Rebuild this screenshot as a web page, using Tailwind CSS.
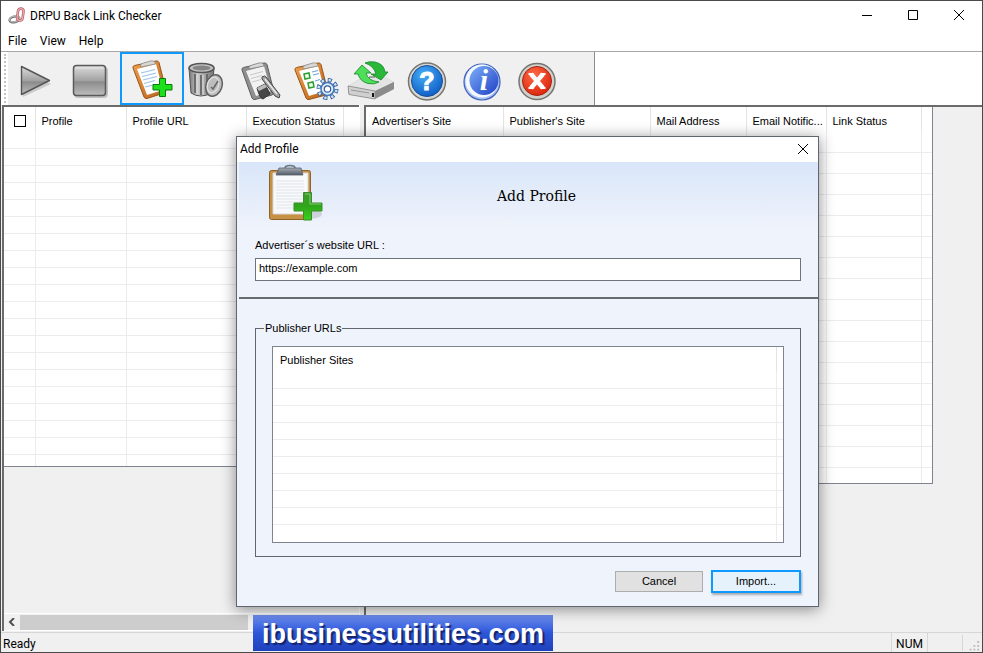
<!DOCTYPE html>
<html lang="en">
<head>
    <meta charset="UTF-8">
    <meta name="viewport" content="width=device-width, initial-scale=1.0">
    <title>DRPU Back Link Checker</title>
    <script src="https://cdn.jsdelivr.net/npm/@tailwindcss/browser@4"></script>
</head>
<body class="bg-[#f0f0f0] text-black font-['Liberation_Sans',sans-serif] text-[11px]">
<div class="relative flex flex-col min-h-screen border border-[#4a4a4a] overflow-hidden">

    <!-- Title bar -->
    <header class="flex items-center h-[30px] bg-white pl-[7px] font-['Roboto',sans-serif] text-[12px]">
        <svg class="w-[18px] h-[18px] mr-1" viewBox="0 0 18 18" fill="none">
            <ellipse cx="6.500" cy="12.500" rx="5" ry="2.800" transform="rotate(-12 6 12.500)" stroke="#6f6f6f" stroke-width="2.400"/>
            <ellipse cx="6.500" cy="12" rx="5" ry="2.800" transform="rotate(-12 6 12)" stroke="#b9b9b9" stroke-width="1.200"/>
            <rect x="9.500" y="1.500" width="5.500" height="12" rx="2.800" transform="rotate(8 12 8)" stroke="#b8626a" stroke-width="2.600"/>
            <rect x="9.500" y="1.500" width="5.500" height="12" rx="2.800" transform="rotate(8 12 8)" stroke="#eda9ae" stroke-width="1.200"/>
        </svg>
        <h1 class="grow">DRPU Back Link Checker</h1>
        <button aria-label="Minimize" class="w-[46px] h-[30px] flex items-center justify-center">
            <svg class="w-3 h-3" viewBox="0 0 12 12" stroke="#000"><path d="M1 5.500h10"/></svg>
        </button>
        <button aria-label="Maximize" class="w-[46px] h-[30px] flex items-center justify-center">
            <svg class="w-3 h-3" viewBox="0 0 12 12" fill="none" stroke="#000"><path d="M1.500 .5h9v9h-9z"/></svg>
        </button>
        <button aria-label="Close" class="w-[46px] h-[30px] flex items-center justify-center">
            <svg class="w-3 h-3" viewBox="0 0 12 12" stroke="#000"><path d="M1 0l10 10M11 0L1 10"/></svg>
        </button>
    </header>

    <!-- Menu -->
    <nav class="flex gap-[13px] h-5 bg-white pl-[7px] items-center font-['Roboto',sans-serif] text-[12px]">
        <a href="#">File</a>
        <a href="#">View</a>
        <a href="#">Help</a>
    </nav>

    <!-- Toolbar -->
    <div class="flex h-[54px] bg-white border-t border-[#a8a8a8]">
        <div class="w-[7px] flex justify-center py-[2px]">
            <div class="w-[2px] border-l-2 border-dotted border-[#c4c4c4]"></div>
        </div>
        <div class="flex items-center bg-[#f0f0f0] border-r border-[#8c8c8c] w-[587px]">
            <button aria-label="Start" class="w-[54px] h-full flex items-center justify-center pt-1">
                <svg class="w-12 h-12" viewBox="0 0 48 48">
                    <defs><linearGradient id="grey" x1="0" y1="0" x2="0" y2="1"><stop offset="0" stop-color="#dcdcdc"/><stop offset=".5" stop-color="#a2a2a2"/><stop offset=".55" stop-color="#8c8c8c"/><stop offset="1" stop-color="#bdbdbd"/></linearGradient></defs>
                    <path d="M12 12v28l28-13z" fill="#000" opacity=".15"/>
                    <path d="M10.500 9.500v28l28-14z" fill="url(#grey)" stroke="#555" stroke-width="1.400" stroke-linejoin="round"/>
                </svg>
            </button>
            <button aria-label="Stop" class="w-[54px] h-full flex items-center justify-center pt-1">
                <svg class="w-12 h-12" viewBox="0 0 48 48">
                    <rect x="9" y="10" width="34" height="31" rx="4" fill="#000" opacity=".2"/>
                    <rect x="8.500" y="8.500" width="32" height="30" rx="3" fill="url(#grey)" stroke="#5a5a5a" stroke-width="1.500"/>
                    <path d="M10.500 11h28" stroke="#e8e8e8"/>
                </svg>
            </button>
            <button aria-label="Add Profile" class="ml-1 -mr-[6px] w-16 h-[53px] border-2 border-[#0d99ff] flex items-center justify-center">
                <svg class="w-12 h-12" viewBox="0 0 48 48">
                    <defs>
                        <linearGradient id="board" x1="0" y1="0" x2="1" y2="1"><stop offset="0" stop-color="#f0a04c"/><stop offset="1" stop-color="#b9621a"/></linearGradient>
                    </defs>
                    <path d="M5 13q-.5-2 1.500-2.500L28 6q2-.5 3 1.500L38 35q0 2-2 3L19 43.500q-2 .5-3-1.500z" fill="url(#board)" stroke="#9a5418"/>
                    <path d="M9 14l19-5 7 26-16 5z" fill="#fdfeff"/>
                    <path d="M13 18l14-3.500M14 21.500l14-3.500M15 25l14-3.500M16 28.500l11-3M17 32l8-2" stroke="#9fc3ea" stroke-width="1.200"/>
                    <path d="M12.500 12q-1-3 3-4l7-2q4-1 5 3z" fill="#d8d8d6" stroke="#8c8c88" stroke-width=".8"/>
                    <path d="M31.500 23.500h6v6h6.500v5.500h-6.500v6.500h-6v-6.500h-6.500v-5.500h6.500z" fill="#1be01b" stroke="#0a7a0a"/>
                </svg>
            </button>
            <button aria-label="Delete Profile" class="w-[55px] h-full flex items-center justify-center pt-1">
                <svg class="w-12 h-12" viewBox="0 0 48 48">
                    <defs><linearGradient id="can" x1="0" y1="0" x2="1" y2="0"><stop offset="0" stop-color="#777"/><stop offset=".35" stop-color="#ccc"/><stop offset="1" stop-color="#727272"/></linearGradient></defs>
                    <path d="M7 11l2 25q9 6 21 0l2-25z" fill="url(#can)" stroke="#555"/>
                    <path d="M13 17v19M19 18v20M25 17v18" stroke="#666" stroke-width="1.800"/>
                    <path d="M15 17v20M21 18v20" stroke="#ddd" stroke-width="1"/>
                    <ellipse cx="19.500" cy="11" rx="12.500" ry="4.500" fill="#c4c4c4" stroke="#555" stroke-width="1.500"/>
                    <ellipse cx="19.500" cy="11" rx="9" ry="2.600" fill="#858585"/>
                    <ellipse cx="32" cy="28.500" rx="8" ry="11" transform="rotate(18 32 28.500)" fill="#bdbdbd" stroke="#5f5f5f" stroke-width="1.500"/>
                    <ellipse cx="31" cy="28" rx="5.500" ry="8" transform="rotate(18 31 28)" fill="none" stroke="#e0e0e0" stroke-width="1.200"/>
                    <path d="M29 30l2 2 5-8" fill="none" stroke="#666" stroke-width="1.500"/>
                </svg>
            </button>
            <button aria-label="Edit Profile" class="w-[55px] h-full flex items-center justify-center pt-1">
                <svg class="w-12 h-12" viewBox="0 0 48 48">
                    <path d="M5 13q-.5-2 1.500-2.500L27 6q2-.5 3 1.500L37 35q0 2-2 3L18 42.500q-2 .5-3-1.500z" fill="#8f8f8f" stroke="#5d5d5d"/>
                    <path d="M9 14l18-5 7 25-15 5z" fill="#f2f2f2"/>
                    <path d="M13 18l13-3.500M14 21.500l11-3M15 25l9-2.500" stroke="#c8c8c8"/>
                    <path d="M12 12q-1-3 3-4l7-2q4-1 5 3z" fill="#d8d8d8" stroke="#808080" stroke-width=".8"/>
                    <path d="M20 31l8-4 5 10-7 5q-3 0-6-11z" fill="#484848" stroke="#333"/>
                    <path d="M20 31l8-4 2 3-8 4z" fill="#bbb"/>
                    <path d="M25 20q3-2 4 0l14 18-1 3-4-2-13-17z" fill="#a5a5a5" stroke="#444"/>
                    <path d="M28 22l12 15" stroke="#eee" stroke-width="1.300"/>
                </svg>
            </button>
            <button aria-label="Profile Settings" class="w-[55px] h-full flex items-center justify-center pt-1">
                <svg class="w-12 h-12" viewBox="0 0 48 48">
                    <path d="M3 13q-.5-2 1.500-2.500L26 6q2-.5 3 1.500L36 35q0 2-2 3L17 42.500q-2 .5-3-1.500z" fill="url(#board)" stroke="#9a5418"/>
                    <path d="M7 14l19-5 7 25-16 5z" fill="#fdfeff"/>
                    <path d="M11 12q-1-3 3-4l7-2q4-1 5 3z" fill="#d8d8d6" stroke="#8c8c88" stroke-width=".8"/>
                    <path d="M12 17l5-1 1 5-5 1zM16 26l5-1 1 5-5 1z" fill="#efffee" stroke="#2e9d2e" stroke-width="1.500"/>
                    <path d="M20 15l6-1.500M21 18l6-1.500M23 24l5-1.500" stroke="#6aa0dc"/>
                    <circle cx="35.500" cy="32" r="9" fill="none" stroke="#315c98" stroke-width="4" stroke-dasharray="4 3.069"/>
                    <circle cx="35.500" cy="32" r="9" fill="none" stroke="#cfe2f7" stroke-width="2.500" stroke-dasharray="2.400 4.669" stroke-dashoffset="-.8"/>
                    <circle cx="35.500" cy="32" r="6.500" fill="#dfecfa" stroke="#4477b8" stroke-width="1.500"/>
                    <circle cx="35.500" cy="32" r="3.200" fill="#fff" stroke="#315c98" stroke-width="1.200"/>
                </svg>
            </button>
            <button aria-label="Update" class="w-[55px] h-full flex items-center justify-center pt-1">
                <svg class="w-12 h-12" viewBox="0 0 48 48">
                    <path d="M1 29L16 20h22l9 5v7L27 42 1 37z" fill="#b7b7b7"/>
                    <path d="M1 29L16 20h22l9 5-19 9z" fill="#e4e4e4"/>
                    <path d="M1 29l27 5v8L2 37.500z" fill="#d0d0d0" stroke="#888" stroke-width=".8"/>
                    <path d="M28 34l19-9v7L28 42z" fill="#8b8b8b"/>
                    <path d="M4 33l18 3" stroke="#999"/>
                    <rect x="25" y="36" width="2" height="4" fill="#111"/>
                    <path d="M22 20h6" stroke="#555"/>
                    <!-- Rotating arrows -->
                    <path d="M18 6q4-2 10-1 9 2 10 10h3l-7 8-10-6h5q-2-8-11-11z" fill="#29b838" stroke="#12862a" stroke-width=".8"/>
                    <path d="M32 25q-5 3-11 1.500-8-2-10-9.500H7l8-9 9 8h-5q2 8 13 9z" fill="#4ede58" stroke="#12862a" stroke-width=".8"/>
                </svg>
            </button>
            <button aria-label="Help" class="w-[55px] h-full flex items-center justify-center pt-1 ml-[1px]">
                <svg class="w-12 h-12" viewBox="0 0 48 48">
                    <defs><radialGradient id="blue" cx=".4" cy=".3" r=".8"><stop offset="0" stop-color="#45aef8"/><stop offset="1" stop-color="#0a55c0"/></radialGradient></defs>
                    <circle cx="24" cy="24.500" r="18.500" fill="#d6d6d3" stroke="#77756f" stroke-width="1.500"/>
                    <circle cx="24" cy="24" r="15.500" fill="url(#blue)" stroke="#1b4e99"/>
                    <text x="24" y="33" text-anchor="middle" font-family="Liberation Sans, sans-serif" font-weight="bold" font-size="25" fill="#fff" stroke="#fff">?</text>
                </svg>
            </button>
            <button aria-label="About" class="w-[55px] h-full flex items-center justify-center pt-1">
                <svg class="w-12 h-12" viewBox="0 0 48 48">
                    <defs><linearGradient id="info" x1="0" y1="0" x2="1" y2="1"><stop offset="0" stop-color="#7fb0fa"/><stop offset="1" stop-color="#1d3fc4"/></linearGradient></defs>
                    <circle cx="24" cy="25" r="18" fill="#a9bff0" stroke="#3d61bd" stroke-width="1.200"/>
                    <circle cx="24" cy="24" r="16.500" fill="#f3f8ff"/>
                    <circle cx="26" cy="23.500" r="14.500" fill="url(#info)"/>
                    <text x="26" y="33" text-anchor="middle" font-family="Liberation Serif, serif" font-weight="bold" font-style="italic" font-size="30" fill="#fff">i</text>
                </svg>
            </button>
            <button aria-label="Exit" class="w-[55px] h-full flex items-center justify-center pt-1">
                <svg class="w-12 h-12" viewBox="0 0 48 48">
                    <defs><radialGradient id="red" cx=".4" cy=".3" r=".8"><stop offset="0" stop-color="#ff6a45"/><stop offset="1" stop-color="#d81f08"/></radialGradient></defs>
                    <circle cx="24" cy="24.500" r="18" fill="#d0d0cc" stroke="#77756f" stroke-width="1.500"/>
                    <circle cx="24" cy="24" r="14.500" fill="url(#red)" stroke="#a3230f"/>
                    <path d="M18 17l12 14M30 17l-12 14" stroke="#fff" stroke-width="4.500"/>
                    <path d="M15.500 17h5M27.500 17h5M15.500 31h5M27.500 31h5" stroke="#fff" stroke-width="2"/>
                </svg>
            </button>
        </div>
    </div>

    <!-- Work area -->
    <main class="flex grow">
        <section class="flex flex-col w-[357px] ml-[1px] border-l-2 border-t-2 border-[#6b6b6b]">
            <div class="bg-white border-b border-[#7f8390] h-[360px] overflow-hidden">
                <table class="table-fixed w-full border-collapse text-left">
                    <colgroup><col class="w-[31px]"><col class="w-[91px]"><col class="w-[120px]"><col class="w-[97px]"><col></colgroup>
                    <thead>
                        <tr class="h-6">
                            <th class="border-r border-[#e4e4e4] pl-[10px] pt-1"><input type="checkbox" aria-label="Select all" class="block appearance-none size-3 border border-black bg-white"></th>
                            <th class="font-normal border-r border-[#e4e4e4] pl-[6px] pt-1">Profile</th>
                            <th class="font-normal border-r border-[#e4e4e4] pl-[6px] pt-1">Profile URL</th>
                            <th class="font-normal border-r border-[#e4e4e4] pl-[6px] pt-1 whitespace-nowrap">Execution Status</th>
                            <th></th>
                        </tr>
                    </thead>
                    <tbody id="profile-rows"></tbody>
                </table>
            </div>
            <div class="grow"></div>
            <!-- Horizontal scrollbar -->
            <div class="flex items-center h-[18px] border-y border-white">
                <button aria-label="Scroll left" class="w-4 h-4 flex items-center justify-center">
                    <svg class="w-2 h-2" viewBox="0 0 8 8" fill="none" stroke="#505050" stroke-width="2"><path d="M6 0L2 4l4 4"/></svg>
                </button>
                <div class="w-[228px] h-[15px] bg-[#cdcdcd]"></div>
            </div>
        </section>
        <div class="w-[5px] border-l border-white"></div>
        <section class="grow border-l-2 border-t-2 border-[#6b6b6b]">
            <div class="bg-white border-b border-r border-[#7f8390] w-[567px] h-[377px] overflow-hidden">
                <table class="table-fixed w-full border-collapse text-left">
                    <colgroup><col class="w-[137px]"><col class="w-[147px]"><col class="w-24"><col class="w-20"><col class="w-[95px]"><col></colgroup>
                    <thead>
                        <tr class="h-6">
                            <th class="font-normal border-r border-[#e4e4e4] pl-[6px] pt-1">Advertiser's Site</th>
                            <th class="font-normal border-r border-[#e4e4e4] pl-[6px] pt-1">Publisher's Site</th>
                            <th class="font-normal border-r border-[#e4e4e4] pl-[6px] pt-1">Mail Address</th>
                            <th class="font-normal border-r border-[#e4e4e4] pl-[6px] pt-1 whitespace-nowrap">Email Notific...</th>
                            <th class="font-normal border-r border-[#e4e4e4] pl-[6px] pt-1">Link Status</th>
                            <th></th>
                        </tr>
                    </thead>
                    <tbody id="link-rows"></tbody>
                </table>
            </div>
        </section>
    </main>

    <!-- Status bar -->
    <footer class="flex items-center h-5 border-t border-[#d7d7d7] pl-[2px] mt-[1px] font-['Roboto',sans-serif] text-[12px]">
        <span class="grow pt-[2px]">Ready</span>
        <span class="w-[37px] text-center border-x border-[#d7d7d7] pt-[2px]">NUM</span>
        <span class="w-[35px] h-4 border-r border-[#d7d7d7]"></span>
        <svg class="w-[19px] h-5" viewBox="0 0 20 20" fill="#bdbdbd">
            <path d="M15 8h2v2h-2zM15 12h2v2h-2zM15 16h2v2h-2zM11 12h2v2h-2zM11 16h2v2h-2zM7 16h2v2H7z"/>
        </svg>
    </footer>

    <!-- Site banner -->
    <div class="absolute left-[252px] bottom-[1px] w-[300px] h-9 flex items-center justify-center bg-linear-to-b from-[#6f8df0] via-[#2c55d8] to-[#1f41bd]">
        <a href="#" class="text-white font-bold text-[27px] leading-8 pt-[2px] [text-shadow:2px_2px_1px_#14246b]">ibusinessutilities.com</a>
    </div>

    <!-- Add Profile dialog -->
    <div role="dialog" aria-labelledby="dialog-title" class="absolute left-[235px] top-[135px] w-[583px] border border-[#5f6670] bg-[#eff3fb] shadow-[0_2px_14px_rgba(0,0,0,0.45)]">
        <div class="flex items-center justify-between h-[25px] bg-white pl-[3px] pb-[2px]">
            <h2 id="dialog-title" class="font-['Roboto',sans-serif] text-[12px]">Add Profile</h2>
            <button aria-label="Close dialog" class="w-[30px] h-[23px] flex items-center justify-center">
                <svg class="w-3 h-3" viewBox="0 0 12 12" stroke="#000"><path d="M1 1l10 10M11 1L1 11"/></svg>
            </button>
        </div>
        <form>
            <div class="bg-linear-to-b from-[#d9e6f9] to-[#eff3fb] to-50% border-b-2 border-[#666b70] ml-[2px] px-4 pb-4">
                <div class="relative h-[75px] flex justify-center pl-[16px]">
                    <svg class="absolute left-[12px] top-[2px] w-[58px] h-[58px]" viewBox="0 0 58 58">
                        <defs>
                            <linearGradient id="plus" x1="0" y1="0" x2="0" y2="1"><stop offset="0" stop-color="#3f9a2c"/><stop offset=".5" stop-color="#2fa51a"/><stop offset="1" stop-color="#37d21c"/></linearGradient>
                            <linearGradient id="clip" x1="0" y1="0" x2="0" y2="1"><stop offset="0" stop-color="#a6adb5"/><stop offset="1" stop-color="#525b66"/></linearGradient>
                        </defs>
                        <ellipse cx="43" cy="50" rx="12" ry="5" fill="#000" opacity=".12"/>
                        <rect x="2.500" y="6.500" width="41" height="49" rx="2" fill="#c69045" stroke="#8c6226"/>
                        <path d="M6 9h35v41H6z" fill="#f7f9fb" stroke="#d8d8d8"/>
                        <path d="M9 17h28M9 20h28M9 23h28M9 26h28M9 29h28M9 32h28M9 35h28M9 38h28M9 41h28M9 44h28" stroke="#d5dce4" stroke-width=".7"/>
                        <path d="M18 4q0-2.500 5-2.500T28 4" fill="none" stroke="#6e7680" stroke-width="1.500"/>
                        <path d="M12 4h22l2 7H9z" fill="url(#clip)" stroke="#59616b" stroke-width=".8"/>
                        <path d="M36.500 28.500h8v10.500h10.500v8H44.500v9h-8v-9H27v-8h9.500z" fill="url(#plus)" stroke="#3c8a2e"/>
                        <path d="M38 30h5v10h11" fill="none" stroke="#9fdc92" opacity=".7"/>
                    </svg>
                    <h3 class="font-['DejaVu_Serif',serif] text-[14px] leading-5 mt-6">Add Profile</h3>
                </div>
                <label for="site-url" class="block leading-4">Advertiser´s website URL :</label>
                <input id="site-url" type="text" value="https://example.com" class="mt-[5px] block w-[546px] h-[23px] border border-[#6f747a] bg-white px-[3px] pb-1">
            </div>

            <div class="pl-[18px] pr-[17px] pt-[21px] pb-[13px]">
                <fieldset class="border border-[#63676d] px-4 pb-[13px] pt-[10px] mb-[13px]">
                    <legend class="-ml-2 px-[1px] leading-4">Publisher URLs</legend>
                    <div class="bg-white border border-[#7f8390] h-[197px] overflow-hidden">
                        <table class="table-fixed w-full border-collapse text-left">
                            <colgroup><col><col class="w-[7px]"></colgroup>
                            <thead>
                                <tr class="h-6"><th class="font-normal border-r border-[#e4e4e4] pl-[7px] pt-[2px]">Publisher Sites</th><th></th></tr>
                            </thead>
                            <tbody id="publisher-rows"></tbody>
                        </table>
                    </div>
                </fieldset>
                <div class="flex justify-end items-center gap-2">
                    <button type="button" class="w-[88px] h-[21px] border border-[#adadad] bg-[#e1e1e1]">Cancel</button>
                    <button type="button" class="w-[90px] h-[23px] border-2 border-[#0d99ff] bg-[#e5f1fb] shadow-[1px_2px_2px_rgba(0,0,0,0.3)]">Import...</button>
                </div>
            </div>
        </form>
    </div>
</div>

<script>
    // Fill a list with empty grid rows
    function addRows(id, count, cols, rowClass)
    {
        const body = document.getElementById(id);
        for (let i = 0; i < count; i++)
        {
            const row = body.insertRow();
            row.className = rowClass;
            for (let c = 0; c < cols; c++)
            {
                row.insertCell().className = c < cols - 1 ? 'border-r border-b border-[#ececec]' : 'border-b border-[#ececec]';
            }
        }
    }

    addRows('profile-rows', 20, 5, 'h-[17px]');
    addRows('link-rows', 17, 6, 'h-[21px]');
    addRows('publisher-rows', 10, 2, 'h-[17px] [&:last-child>td]:border-b-0');
</script>
</body>
</html>
